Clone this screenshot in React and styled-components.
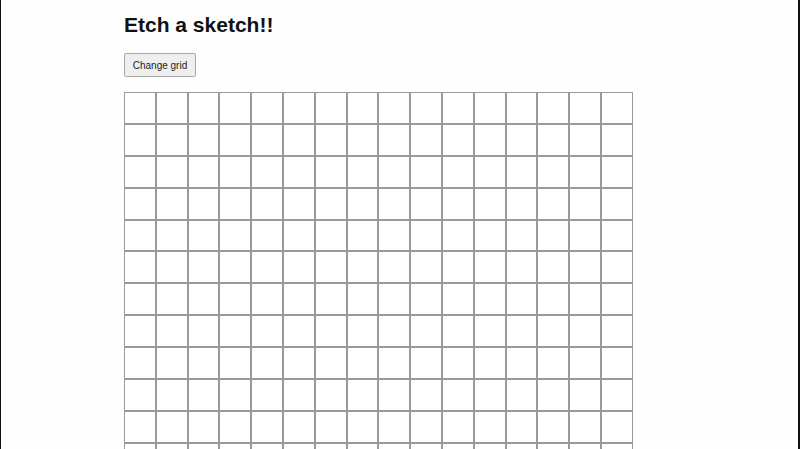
import React from 'react';
import styled, { createGlobalStyle } from 'styled-components';

const GlobalStyle = createGlobalStyle`
  html, body {
    margin: 0;
    padding: 0;
    height: 100%;
    overflow: hidden;
    background: #fff;
  }
  body {
    font-family: "Liberation Sans", Arial, sans-serif;
  }
`;

const Page = styled.div`
  box-sizing: border-box;
  height: 449px;
  overflow: hidden;
  border-left: 1px solid #111;
  border-right: 2px solid #111;
  background: #fefefe;
  padding: 12px 0 0 123px;
`;

const Title = styled.h1`
  margin: 0 0 15px 0;
  font-size: 21px;
  font-weight: bold;
  color: #111;
  line-height: 26px;
`;

const Button = styled.button`
  display: block;
  box-sizing: border-box;
  width: 72px;
  height: 24px;
  padding: 0;
  font-family: "Liberation Sans", Arial, sans-serif;
  font-size: 10px;
  color: #222;
  background: #efefef;
  border: 1px solid #a8a8a8;
  border-radius: 2px;
  margin-bottom: 15px;
`;

const Grid = styled.div`
  display: grid;
  grid-template-columns: repeat(${(p) => p.size}, 31.8px);
  grid-auto-rows: 31.9px;
  width: max-content;
`;

const Cell = styled.div`
  box-sizing: border-box;
  border: 1px solid #9a9a9a;
  background: #fff;
`;

export default function App() {
  const size = 16;
  const cells = Array.from({ length: size * size });
  return (
    <>
      <GlobalStyle />
      <Page>
        <Title>Etch a sketch!!</Title>
        <Button>Change grid</Button>
        <Grid size={size}>
          {cells.map((_, i) => (
            <Cell key={i} />
          ))}
        </Grid>
      </Page>
    </>
  );
}
